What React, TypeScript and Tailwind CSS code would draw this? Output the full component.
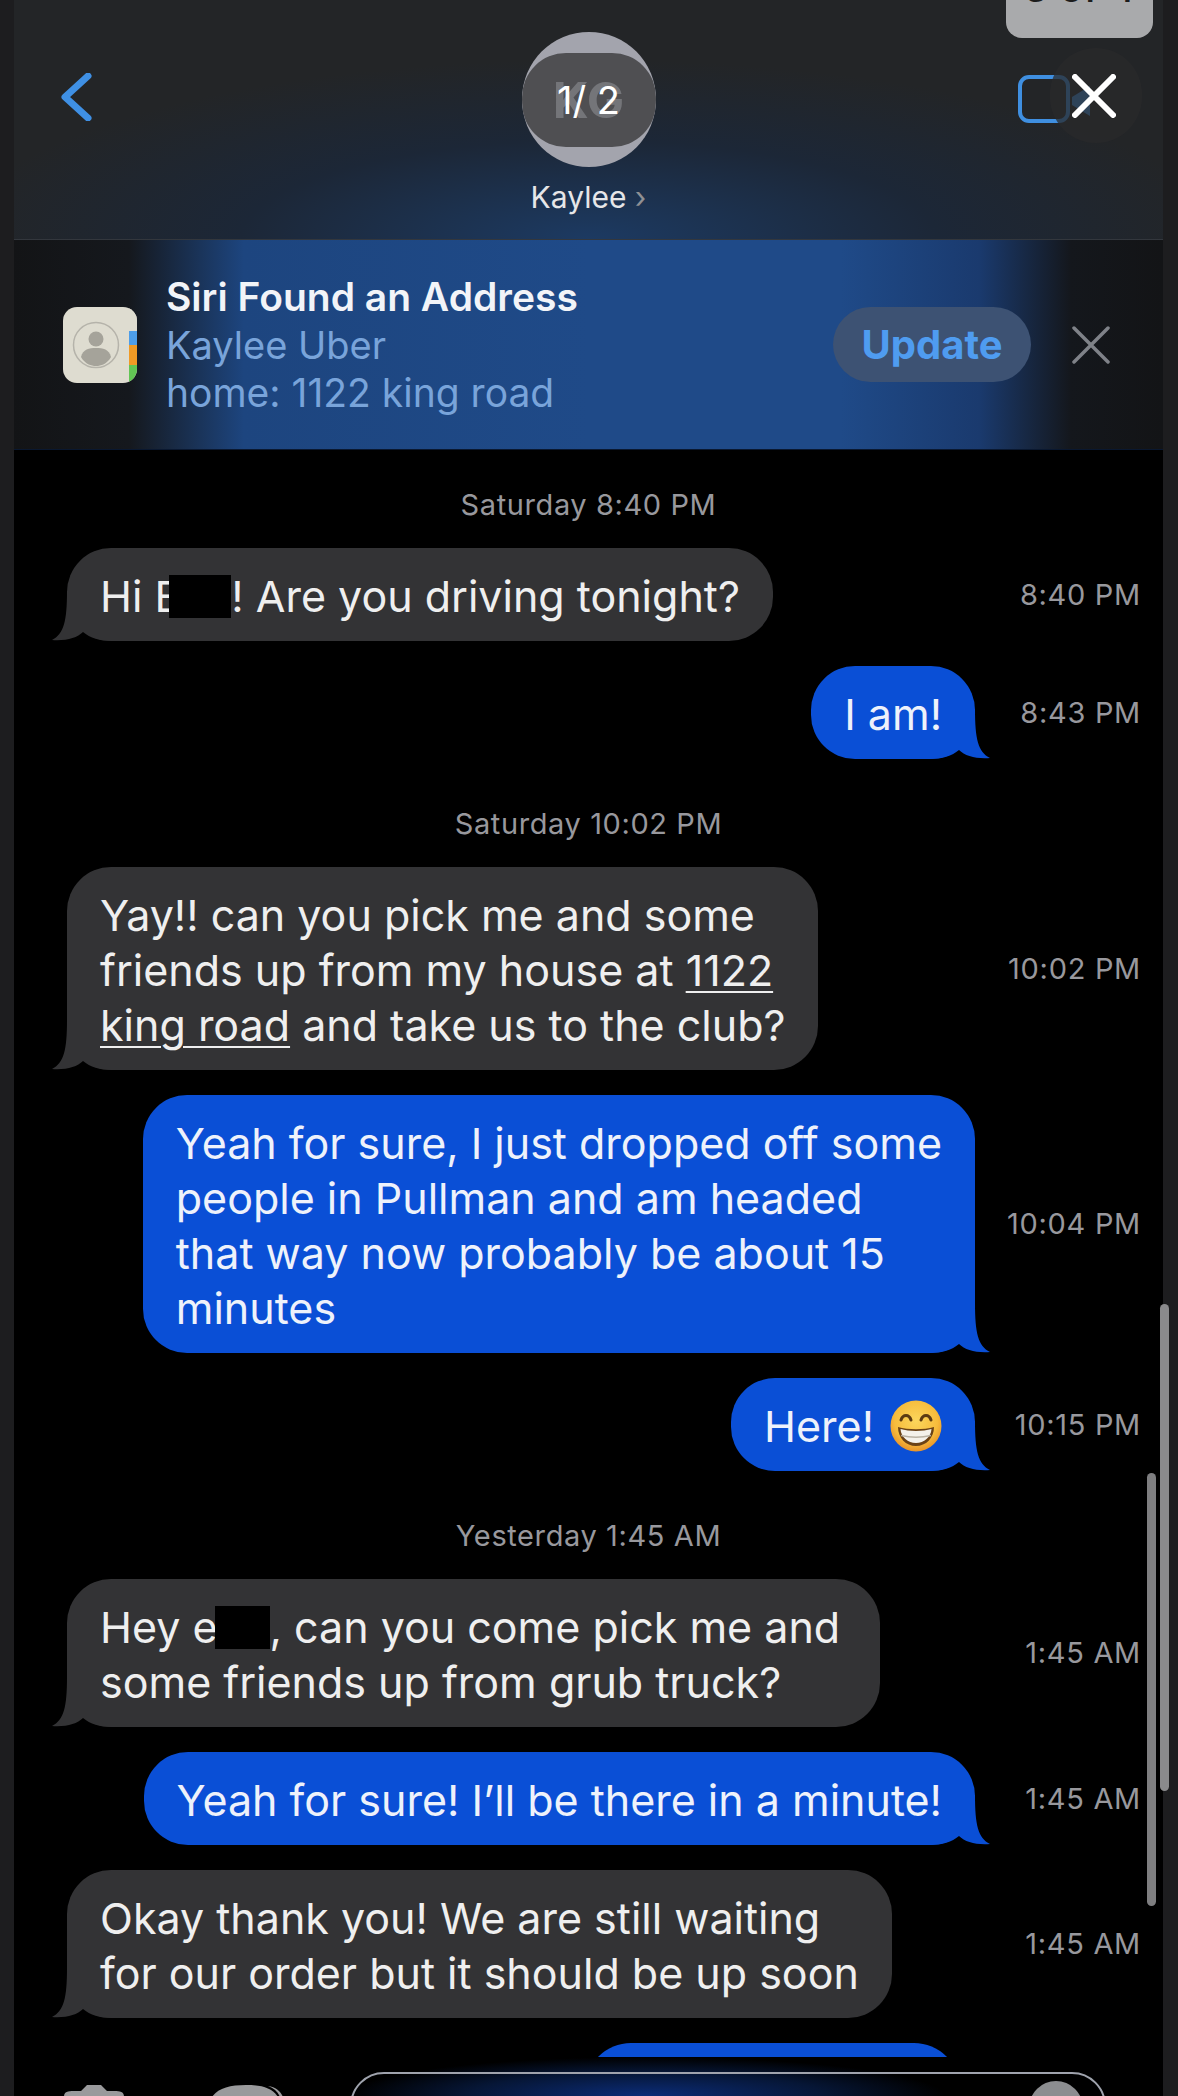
import { ReactNode } from 'react';

const font = "font-['Inter','Liberation_Sans',sans-serif]";

function Tail({ out }: { out?: boolean }) {
  return (
    <svg
      viewBox="0 0 60 50"
      className={
        out
          ? 'absolute right-[-15px] bottom-0 w-[60px] h-[50px] -scale-x-100 text-[#0a4fd6]'
          : 'absolute left-[-15px] bottom-0 w-[60px] h-[50px] text-[#333335]'
      }
    >
      <path d="M15 0C15 30 12 43 0 49C14 50 25 47 31 41C38 47 48 50 60 50V0Z" fill="currentColor" />
    </svg>
  );
}

function Redact({ first }: { first?: boolean }) {
  return (
    <span
      className={`inline-block h-[43px] bg-black align-[-6px] ${first ? 'w-[62px] -ml-[11px]' : 'w-[55px] -ml-[3px]'}`}
    />
  );
}

function Grin() {
  return (
    <svg viewBox="0 0 52 52" className="inline-block w-[52px] h-[52px] ml-[16px] align-[-10px]">
      <defs>
        <radialGradient id="face" cx="50%" cy="40%" r="60%">
          <stop offset="0%" stopColor="#fbd65c" />
          <stop offset="70%" stopColor="#f7bc3c" />
          <stop offset="100%" stopColor="#e8932a" />
        </radialGradient>
      </defs>
      <circle cx="26" cy="26" r="25.5" fill="url(#face)" />
      <path d="M11 20C13 14 19 14 21 20M31 20C33 14 39 14 41 20" fill="none" stroke="#5c3a12" strokeWidth="3" strokeLinecap="round" />
      <path d="M8 27C18 30 34 30 44 27C44 38 36 46 26 46C16 46 8 38 8 27Z" fill="#6b4216" />
      <path d="M10.500 29C19 31.500 33 31.500 41.500 29C41 37 34 43 26 43C18 43 11 37 10.500 29Z" fill="#f4f1ea" />
      <path d="M11 35.500C20 37.500 32 37.500 41 35.500" fill="none" stroke="#b9b2a4" strokeWidth="1.500" />
    </svg>
  );
}

function Row({ out, time, children }: { out?: boolean; time: string; children: ReactNode }) {
  return (
    <div className="flex items-center">
      <div className={out ? 'flex-1 flex justify-end' : 'flex-1 flex justify-start pl-[53px]'}>
        <div
          className={
            out
              ? 'relative rounded-[44px] bg-[#0a4fd6] px-[33px] pt-[21px] pb-[17px] text-[43px] leading-[55px] text-[#eef2fb] whitespace-nowrap'
              : 'relative rounded-[44px] bg-[#333335] px-[33px] pt-[21px] pb-[17px] text-[43px] leading-[55px] text-[#efefef] whitespace-nowrap'
          }
        >
          <Tail out={out} />
          <div className="relative">{children}</div>
        </div>
      </div>
      <div className="w-[188px] pr-[22px] text-right text-[29px] tracking-[0.7px] text-[#98989d] whitespace-nowrap">{time}</div>
    </div>
  );
}

function Stamp({ children }: { children: ReactNode }) {
  return (
    <div className="mt-[23px] h-[34px] mb-[1px] text-center text-[29px] tracking-[0.6px] leading-[34px] text-[#98989d]">{children}</div>
  );
}

function Header() {
  return (
    <header className="relative h-[240px] flex flex-col items-center pt-[32px] bg-[radial-gradient(ellipse_55%_75%_at_50%_100%,#1c3a62_0%,#1c2737_55%,#232527_100%)] border-b border-[#33373d]">
      <svg viewBox="0 0 32 48" className="absolute left-[46px] top-[73px] w-[32px] h-[48px]">
        <path d="M28 3L5 24L28 45" fill="none" stroke="#3f90e4" strokeWidth="7" strokeLinecap="round" strokeLinejoin="round" />
      </svg>

      <div className="relative w-[134px] h-[135px] rounded-full bg-[#a3a4ad] flex items-center justify-center overflow-hidden">
        <div className="w-[134px] h-[94px] rounded-[44px] bg-[#4f4f52] flex items-center justify-center">
          <span className="relative text-[50px] leading-none font-bold text-[#747579]">
            KG
            <span className="absolute inset-0 flex items-center justify-center text-[38px] font-normal text-white whitespace-nowrap">1/ 2</span>
          </span>
        </div>
      </div>
      <div className="mt-[13px] text-[30px] leading-[34px] text-[#e6e6e8]">
        Kaylee <span className="text-[#8f9094]">›</span>
      </div>

      {/* page counter and close, sitting over the video call button */}
      <div className="absolute right-[10px] top-0 w-[147px] h-[38px] rounded-b-[16px] bg-[#a9aaac] overflow-hidden flex justify-center">
        <span className="-mt-[36px] text-[40px] leading-[48px] font-medium text-[#1c1c1c] whitespace-nowrap">3 of 4</span>
      </div>
      <div className="absolute left-[1004px] top-[75px] w-[52px] h-[48px] rounded-[11px] border-[4px] border-[#3f8fe0]" />
      <svg viewBox="0 0 24 36" className="absolute left-[1056px] top-[83px] w-[24px] h-[36px]">
        <path d="M2 14L20 3V33L2 22Z" fill="#3f8fe0" />
      </svg>
      <div className="absolute left-[1036px] top-[48px] w-[92px] h-[95px] rounded-full bg-[#2a2a2b]/75 flex items-center justify-center">
        <svg viewBox="0 0 44 44" className="-ml-[4px] w-[44px] h-[44px]">
          <path d="M3 3L41 41M41 3L3 41" stroke="#fff" strokeWidth="6" strokeLinecap="round" />
        </svg>
      </div>
    </header>
  );
}

function SiriBanner() {
  return (
    <section className="h-[210px] flex items-center bg-[linear-gradient(90deg,#131416_0%,#15181d_10%,#1d457f_20%,#1f4a88_50%,#1f4a88_72%,#1a3a6e_84%,#14171c_92%,#131416_100%)] pl-[49px] pr-[53px] border-b border-[#0a1830]">
      <div className="relative w-[74px] h-[76px] rounded-[14px] bg-[#dedcd0] overflow-hidden flex items-center justify-center pr-[8px] shrink-0">
        <svg viewBox="0 0 48 48" className="w-[48px] h-[48px]">
          <circle cx="24" cy="24" r="22.500" fill="none" stroke="#b5b3aa" strokeWidth="1.500" />
          <circle cx="24" cy="18" r="7.500" fill="#a5a39a" />
          <path d="M9 36C11 28 17 27 24 27C31 27 37 28 39 36C35 43 29 45 24 45C19 45 13 43 9 36Z" fill="#a5a39a" />
        </svg>
        <div className="absolute right-0 inset-y-0 w-[8px] flex flex-col">
          <div className="h-[24px] bg-[#dedcd0]" />
          <div className="h-[14px] bg-[#4d9de8]" />
          <div className="h-[20px] bg-[#f09a25]" />
          <div className="flex-1 bg-[#62c554]" />
        </div>
      </div>
      <div className="ml-[29px] flex-1">
        <div className="text-[39px] leading-[48px] font-semibold text-[#f2f4f8]">Siri Found an Address</div>
        <div className="text-[38px] leading-[48px] text-[#79a4da]">Kaylee Uber</div>
        <div className="text-[39px] leading-[48px] text-[#79a4da]">home: 1122 king road</div>
      </div>
      <div className="ml-[1px] w-[198px] h-[75px] rounded-full bg-[#3d5273] flex items-center justify-center text-[40px] font-bold text-[#4f9cf0]">
        Update
      </div>
      <svg viewBox="0 0 38 38" className="ml-[41px] w-[38px] h-[38px] shrink-0">
        <path d="M2 2L36 36M36 2L2 36" stroke="#7f8288" strokeWidth="3.500" strokeLinecap="round" />
      </svg>
    </section>
  );
}

function Composer() {
  return (
    <footer className="relative h-[39px] shrink-0 bg-[radial-gradient(ellipse_26%_100%_at_55%_100%,#0b2c78_0%,#061636_60%,#000_100%)] overflow-hidden">
      {/* camera and apps buttons, cut off by the bottom of the picture */}
      <svg viewBox="0 0 60 12" className="absolute left-[50px] top-[28px] w-[60px] h-[12px]">
        <path d="M0 12C0 7 3 6 10 6H17L23 0H37L43 6H50C57 6 60 7 60 12Z" fill="#9a9a9c" />
      </svg>
      <svg viewBox="0 0 84 12" className="absolute left-[196px] top-[28px] w-[84px] h-[12px]">
        <path d="M2 12C8 3 20 0 36 0C52 0 62 3 68 12Z" fill="#9a9a9c" />
        <path d="M70 12C68 7 64 3 58 1C66 2 71 7 73 12Z" fill="#9a9a9c" />
      </svg>
      <div className="absolute left-[336px] top-[15px] w-[756px] h-[60px] rounded-t-[34px] border-2 border-[#9fa3ad]" />
      <div className="absolute left-[1015px] top-[24px] w-[54px] h-[54px] rounded-full bg-[#8c8d90]" />
    </footer>
  );
}

export default function App() {
  return (
    <div className={`relative w-[1178px] h-[2096px] flex bg-[#1d1d1f] overflow-hidden ${font}`}>
      <div className="w-[14px] shrink-0" />
      <main className="flex-1 min-w-0 flex flex-col bg-black">
        <Header />
        <SiriBanner />
        <div className="flex-1 min-h-0 overflow-hidden flex flex-col gap-[25px] pt-[15px]">
          <Stamp>Saturday 8:40 PM</Stamp>
          <Row time="8:40 PM">
            Hi E<Redact first />! Are you driving tonight?
          </Row>
          <Row out time="8:43 PM">
            I am!
          </Row>
          <Stamp>Saturday 10:02 PM</Stamp>
          <Row time="10:02 PM">
            Yay!! can you pick me and some
            <br />
            friends up from my house at <span className="underline underline-offset-[5px] decoration-2">1122</span>
            <br />
            <span className="underline underline-offset-[5px] decoration-2">king road</span> and take us to the club?
          </Row>
          <Row out time="10:04 PM">
            Yeah for sure, I just dropped off some
            <br />
            people in Pullman and am headed
            <br />
            that way now probably be about 15
            <br />
            minutes
          </Row>
          <Row out time="10:15 PM">
            Here!
            <Grin />
          </Row>
          <Stamp>Yesterday 1:45 AM</Stamp>
          <Row time="1:45 AM">
            <div className="pr-[7px]">
              Hey e<Redact />, can you come pick me and
              <br />
              some friends up from grub truck?
            </div>
          </Row>
          <Row out time="1:45 AM">
            Yeah for sure! I’ll be there in a minute!
          </Row>
          <Row time="1:45 AM">
            Okay thank you! We are still waiting
            <br />
            for our order but it should be up soon
          </Row>
          <div className="flex">
            <div className="ml-[571px] w-[375px] h-[60px] rounded-t-[46px] bg-[#0a4fd6]" />
          </div>
        </div>
        <Composer />
      </main>
      <div className="w-[15px] shrink-0" />

      {/* two overlaid scroll indicators */}
      <div className="absolute left-[1160px] top-[1304px] w-[9px] h-[487px] rounded-full bg-[#8a8a8c]" />
      <div className="absolute left-[1147px] top-[1473px] w-[9px] h-[433px] rounded-full bg-[#7e7e80]" />
    </div>
  );
}
